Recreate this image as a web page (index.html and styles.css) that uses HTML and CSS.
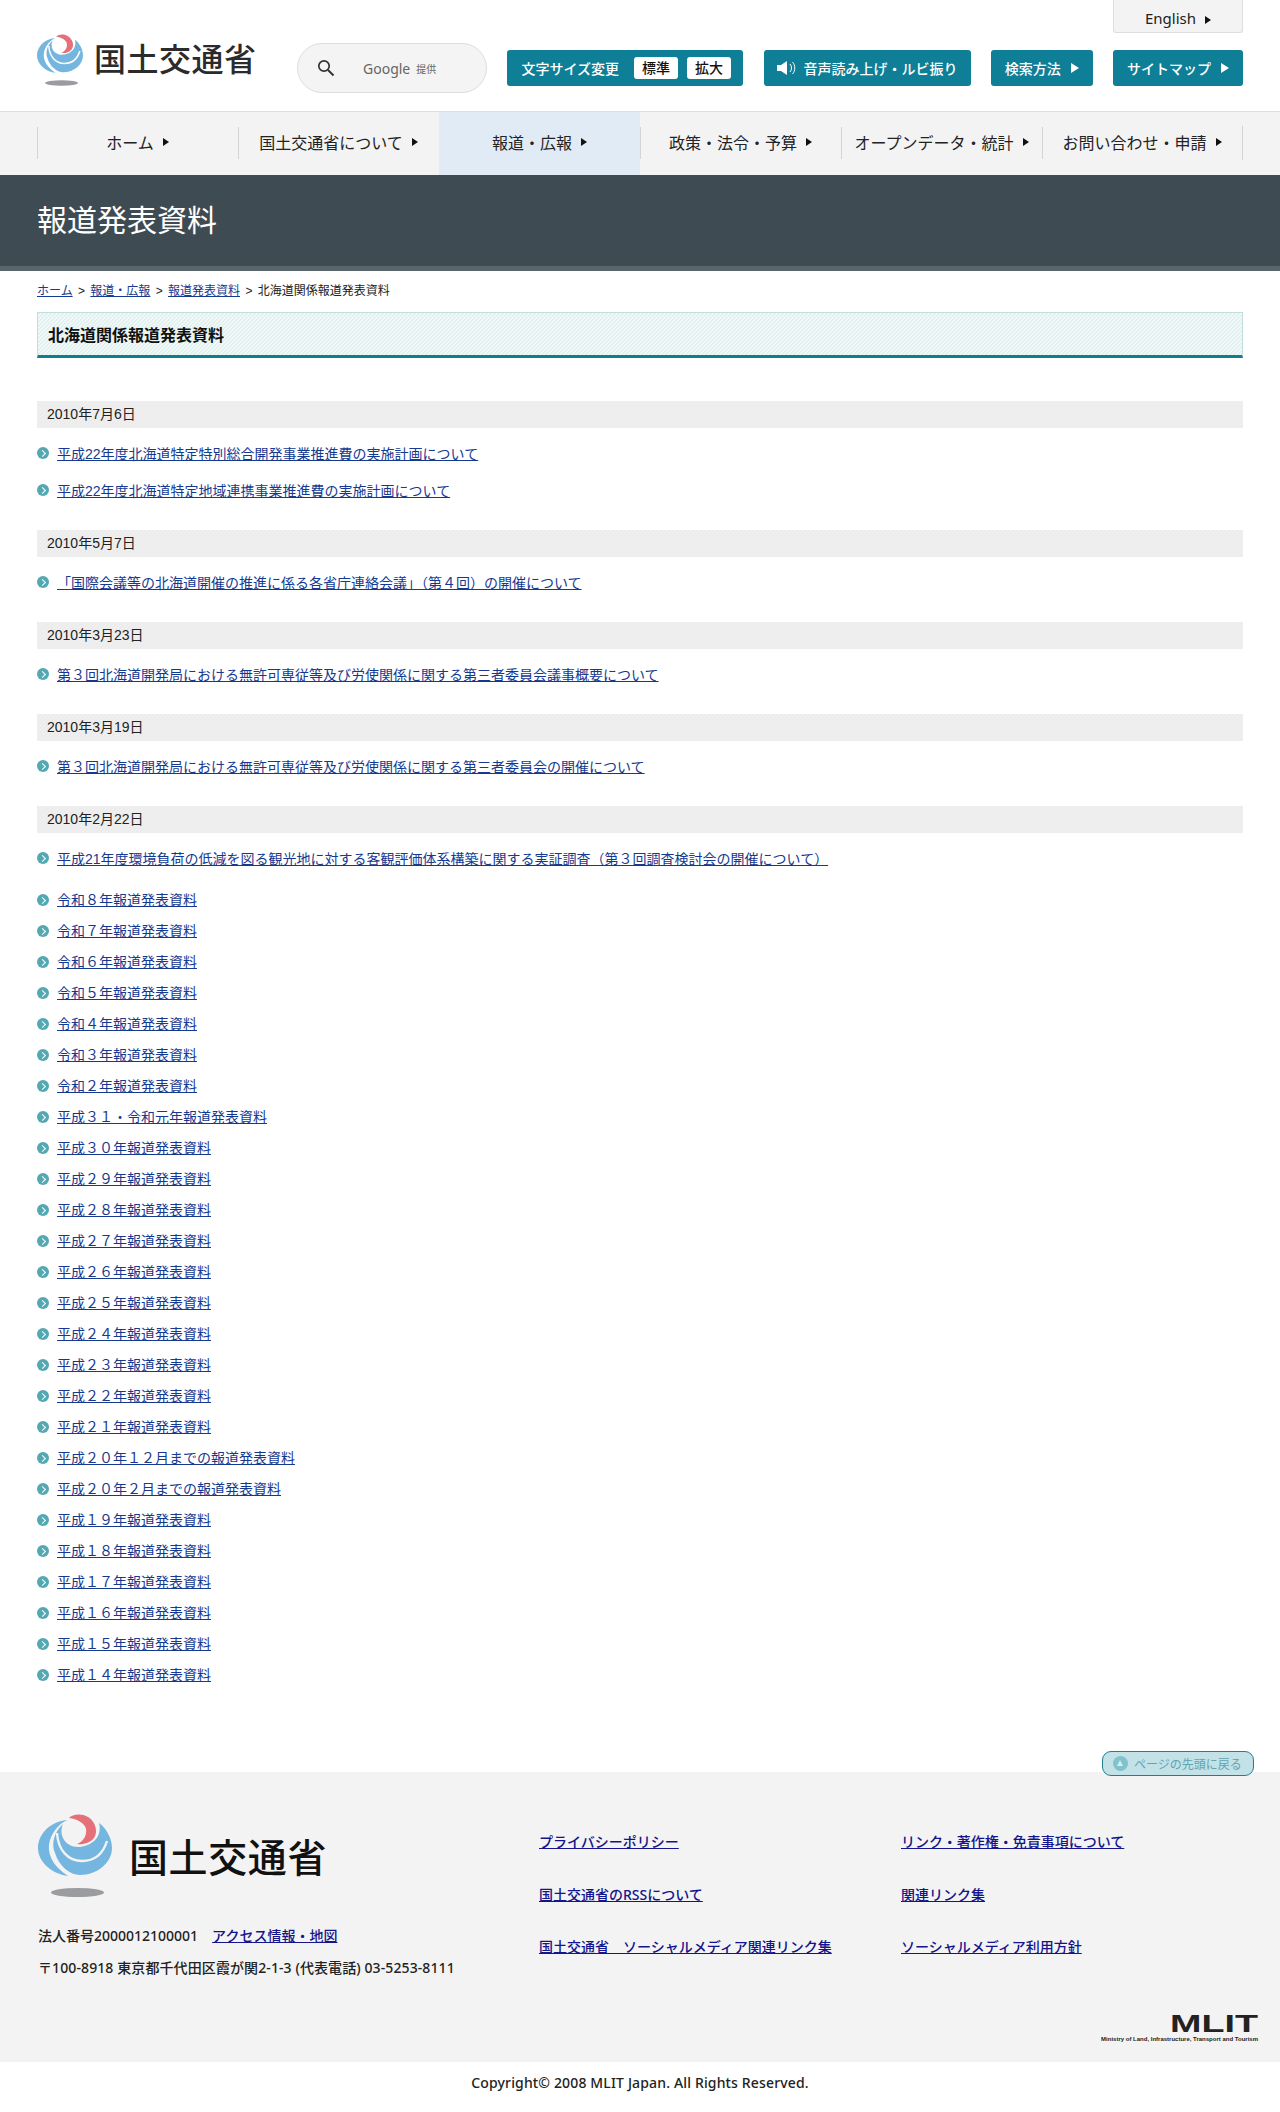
FILE: index.html
```html
<!DOCTYPE html>
<html lang="ja">
  <head>
    <meta charset="UTF-8" />
    <meta name="viewport" content="width=device-width, initial-scale=1.0" />
    <title>北海道関係報道発表資料 - 国土交通省</title>
    <link rel="stylesheet" href="styles.css">
  </head>
  <body>
    <svg class="defs" width="0" height="0">
      <symbol id="mlit-mark" viewBox="0 0 74 86">
        <path d="M29 6 C10 8 0 22 0 34 C0 48 14 60 30 62 C14 52 8 38 12 26 C15 17 21 10 29 6 Z" fill="#74b6df" />
        <path d="M25 10 C16 18 13 30 17 39 C21 52 32 61 42 61 C60 61 74 48 74 34 C74 24 68 14 61 9 C65 24 52 33 40 33 C28 33 20 22 25 10 Z" fill="#74b6df" />
        <path d="M19 19 C20 36 30 47 44 47 C56 47 65 40 69 27" fill="none" stroke="var(--logo-bg)" stroke-width="2.4" />
        <path d="M31 4 C34 0 44 -1 50 3 C58 8 60 18 56 24 C52 29 45 31 39 30 C46 27 49 21 48 15 C47 9 39 5 31 4 Z" fill="#e5707a" />
        <ellipse cx="39.5" cy="78.5" rx="26.5" ry="4.5" fill="#9b9ca0" />
      </symbol>
    </svg>

    <header class="site-header">
      <a class="logo" href="#">
        <svg class="logo-mark" width="46" height="54"><use href="#mlit-mark" /></svg>
        <span class="logo-name">国土交通省</span>
      </a>
      <div class="header-main">
        <div class="lang-row"><a class="lang-tab arrow" href="#">English</a></div>
        <div class="tools">
          <div class="search">
            <svg class="search-icon" width="18" height="18" viewBox="0 0 18 18">
              <circle cx="7" cy="7" r="5.2" fill="none" stroke="#333" stroke-width="1.7" />
              <path d="M11 11 L16.5 16.5" stroke="#333" stroke-width="2" />
            </svg>
            <span class="google">Google</span>
            <span class="google-by">提供</span>
          </div>
          <div class="tool tool-size">
            文字サイズ変更
            <span class="chip chip-first">標準</span>
            <span class="chip">拡大</span>
          </div>
          <a class="tool tool-voice" href="#">
            <svg width="20" height="16" viewBox="0 0 20 16">
              <path d="M0 5 H4 L10 1 V15 L4 11 H0 Z" fill="#fff" />
              <path d="M13 4 C15 6 15 10 13 12 M15.5 2 C18.5 5 18.5 11 15.5 14" fill="none" stroke="#fff" stroke-width="1" />
            </svg>
            音声読み上げ・ルビ振り
          </a>
          <a class="tool tool-method arrow arrow-white" href="#">検索方法</a>
          <a class="tool tool-map arrow arrow-white" href="#">サイトマップ</a>
        </div>
      </div>
    </header>

    <nav class="global-nav">
      <a class="arrow" href="#">ホーム</a>
      <a class="arrow" href="#">国土交通省について</a>
      <a class="arrow active" href="#">報道・広報</a>
      <a class="arrow" href="#">政策・法令・予算</a>
      <a class="arrow" href="#">オープンデータ・統計</a>
      <a class="arrow" href="#">お問い合わせ・申請</a>
    </nav>

    <div class="page-title"><h1>報道発表資料</h1></div>

    <main class="content">
      <p class="breadcrumb">
        <a href="#">ホーム</a> &gt; <a href="#">報道・広報</a> &gt; <a href="#">報道発表資料</a> &gt; 北海道関係報道発表資料
      </p>
      <h2 class="section-title">北海道関係報道発表資料</h2>

      <h3 class="date date-first">2010年7月6日</h3>
      <ul class="news">
        <li><a href="#">平成22年度北海道特定特別総合開発事業推進費の実施計画について</a></li>
        <li><a href="#">平成22年度北海道特定地域連携事業推進費の実施計画について</a></li>
      </ul>
      <h3 class="date">2010年5月7日</h3>
      <ul class="news">
        <li><a href="#">「国際会議等の北海道開催の推進に係る各省庁連絡会議」（第４回）の開催について</a></li>
      </ul>
      <h3 class="date">2010年3月23日</h3>
      <ul class="news">
        <li><a href="#">第３回北海道開発局における無許可専従等及び労使関係に関する第三者委員会議事概要について</a></li>
      </ul>
      <h3 class="date">2010年3月19日</h3>
      <ul class="news">
        <li><a href="#">第３回北海道開発局における無許可専従等及び労使関係に関する第三者委員会の開催について</a></li>
      </ul>
      <h3 class="date">2010年2月22日</h3>
      <ul class="news">
        <li><a href="#">平成21年度環境負荷の低減を図る観光地に対する客観評価体系構築に関する実証調査（第３回調査検討会の開催について）</a></li>
      </ul>

      <ul class="archive">
        <li><a href="#">令和８年報道発表資料</a></li>
        <li><a href="#">令和７年報道発表資料</a></li>
        <li><a href="#">令和６年報道発表資料</a></li>
        <li><a href="#">令和５年報道発表資料</a></li>
        <li><a href="#">令和４年報道発表資料</a></li>
        <li><a href="#">令和３年報道発表資料</a></li>
        <li><a href="#">令和２年報道発表資料</a></li>
        <li><a href="#">平成３１・令和元年報道発表資料</a></li>
        <li><a href="#">平成３０年報道発表資料</a></li>
        <li><a href="#">平成２９年報道発表資料</a></li>
        <li><a href="#">平成２８年報道発表資料</a></li>
        <li><a href="#">平成２７年報道発表資料</a></li>
        <li><a href="#">平成２６年報道発表資料</a></li>
        <li><a href="#">平成２５年報道発表資料</a></li>
        <li><a href="#">平成２４年報道発表資料</a></li>
        <li><a href="#">平成２３年報道発表資料</a></li>
        <li><a href="#">平成２２年報道発表資料</a></li>
        <li><a href="#">平成２１年報道発表資料</a></li>
        <li><a href="#">平成２０年１２月までの報道発表資料</a></li>
        <li><a href="#">平成２０年２月までの報道発表資料</a></li>
        <li><a href="#">平成１９年報道発表資料</a></li>
        <li><a href="#">平成１８年報道発表資料</a></li>
        <li><a href="#">平成１７年報道発表資料</a></li>
        <li><a href="#">平成１６年報道発表資料</a></li>
        <li><a href="#">平成１５年報道発表資料</a></li>
        <li><a href="#">平成１４年報道発表資料</a></li>
      </ul>
    </main>

    <footer class="site-footer">
      <a class="page-top" href="#"><span class="page-top-icon"></span>ページの先頭に戻る</a>
      <div class="footer-main">
        <div class="footer-info">
          <a class="footer-logo" href="#">
            <svg width="74" height="86"><use href="#mlit-mark" /></svg>
            <span class="footer-name">国土交通省</span>
          </a>
          <p class="corp-no">法人番号2000012100001<a href="#">アクセス情報・地図</a></p>
          <p class="address">〒100-8918 東京都千代田区霞が関2-1-3 (代表電話) 03-5253-8111</p>
        </div>
        <div class="footer-links">
          <a href="#">プライバシーポリシー</a>
          <a href="#">リンク・著作権・免責事項について</a>
          <a href="#">国土交通省のRSSについて</a>
          <a href="#">関連リンク集</a>
          <a href="#">国土交通省　ソーシャルメディア関連リンク集</a>
          <a href="#">ソーシャルメディア利用方針</a>
        </div>
      </div>
      <div class="footer-mlit">
        <span class="mlit-word">MLIT</span>
        <span class="mlit-full">Ministry of Land, Infrastructure, Transport and Tourism</span>
      </div>
    </footer>
    <p class="copyright">Copyright© 2008 MLIT Japan. All Rights Reserved.</p>
  </body>
</html>
```

FILE: styles.css
```css
* {
  box-sizing: border-box;
}
body {
  margin: 0;
  background-color: #fff;
  color: #222;
  font-family: "Noto Sans", "Noto Sans CJK JP", sans-serif;
  font-size: 14px;
  --logo-bg: #fff;
}
a {
  color: inherit;
  text-decoration: none;
}
p,
h1,
h2,
h3,
ul {
  margin: 0;
  padding: 0;
}
.defs {
  position: absolute;
}

/* arrows */
.arrow::after {
  content: "";
  display: inline-block;
  margin-left: 9px;
  border-left: 6px solid #111;
  border-top: 4px solid transparent;
  border-bottom: 4px solid transparent;
}
.arrow-white::after {
  margin-left: 10px;
  border-left: 8px solid #fff;
  border-top: 5px solid transparent;
  border-bottom: 5px solid transparent;
}

/* header */
.site-header {
  display: flex;
  height: 112px;
  padding: 0 37px;
  border-bottom: 1px solid #ddd;
}
.logo {
  display: flex;
  width: 260px;
  padding-top: 34px;
}
.logo-mark {
  flex: none;
}
.logo-name {
  margin: 3px 0 0 11px;
  color: #2b2b2b;
  font-family: "Noto Sans CJK JP", sans-serif;
  font-size: 32px;
  font-weight: 500;
  letter-spacing: 0.5px;
  line-height: 40px;
  white-space: nowrap;
}
.header-main {
  flex: 1;
}
.lang-row {
  display: flex;
  justify-content: flex-end;
  height: 43px;
}
.lang-tab {
  width: 130px;
  height: 33px;
  padding-top: 7px;
  background-color: #f3f3f3;
  border: 1px solid #ddd;
  border-top: none;
  border-radius: 0 0 3px 3px;
  font-size: 15px;
  line-height: 22px;
  text-align: center;
}
.tools {
  display: flex;
  align-items: center;
  justify-content: space-between;
}
.search {
  display: flex;
  align-items: center;
  width: 190px;
  height: 50px;
  padding-left: 19px;
  background-color: #f4f4f4;
  border: 1px solid #ddd;
  border-radius: 25px;
}
.search-icon {
  flex: none;
}
.google {
  margin-left: 28px;
  color: #666;
  font-size: 14px;
}
.google-by {
  margin: 1px 0 0 6px;
  color: #666;
  font-size: 10px;
}
.tool {
  display: flex;
  align-items: center;
  justify-content: center;
  height: 36px;
  background-color: #0e7f96;
  border-radius: 3px;
  color: #fff;
  font-size: 14px;
  font-weight: 500;
  white-space: nowrap;
}
.tool-size {
  width: 236px;
  padding-left: 2px;
}
.tool-voice {
  gap: 7px;
  width: 207px;
}
.tool-method {
  width: 102px;
}
.tool-map {
  width: 130px;
}
.chip {
  width: 44px;
  height: 22px;
  margin-left: 9px;
  background-color: #fff;
  border-radius: 3px;
  color: #111;
  font-size: 14px;
  line-height: 22px;
  text-align: center;
}
.chip-first {
  margin-left: 15px;
}

/* global nav */
.global-nav {
  display: grid;
  grid-template-columns: repeat(6, 1fr);
  height: 63px;
  padding: 0 37px;
  background-color: #f3f3f3;
}
.global-nav a {
  display: flex;
  align-items: center;
  justify-content: center;
  position: relative;
  padding-bottom: 3px;
  font-size: 16px;
  white-space: nowrap;
}
.global-nav a::before {
  content: "";
  position: absolute;
  left: 0;
  top: 15px;
  bottom: 16px;
  border-left: 1px solid #d4d4d4;
}
.global-nav a:last-child {
  border-right: 1px solid #d4d4d4;
  border-image: linear-gradient(transparent 15px, #d4d4d4 15px, #d4d4d4 47px, transparent 47px) 1;
}
.global-nav .active {
  background-color: #e0ebf5;
}
.global-nav .active::before {
  display: none;
}

/* title */
.page-title {
  height: 96px;
  padding-left: 37px;
  background-color: #3f4b52;
  border-bottom: 5px solid #59666c;
}
.page-title h1 {
  color: #fff;
  font-size: 30px;
  font-weight: 400;
  line-height: 89px;
}

/* content */
.content {
  padding: 10px 37px 0;
  font-family: "Liberation Sans", "Noto Sans CJK JP", sans-serif;
}
.content a {
  color: #15398f;
  text-decoration: underline;
}
.breadcrumb {
  font-size: 12px;
  line-height: 20px;
  word-spacing: 2px;
}
.section-title {
  height: 46px;
  margin-top: 11px;
  padding-left: 10px;
  background-color: #f1f8f8;
  background-image: linear-gradient(135deg, #e2f0f0 25%, transparent 25%, transparent 50%, #e2f0f0 50%, #e2f0f0 75%, transparent 75%);
  background-size: 4px 4px;
  border: 1px solid #c5dcdc;
  border-bottom: 3px solid #0e7f8c;
  color: #111;
  font-size: 16px;
  font-weight: 700;
  line-height: 46px;
}
.date {
  height: 27px;
  margin-top: 28px;
  padding-left: 10px;
  background-color: #f0f0f0;
  background-image: linear-gradient(135deg, #ebebeb 25%, transparent 25%, transparent 50%, #ebebeb 50%, #ebebeb 75%, transparent 75%);
  background-size: 4px 4px;
  font-size: 14px;
  font-weight: 400;
  line-height: 27px;
}
.date-first {
  margin-top: 43px;
}
.news,
.archive {
  list-style: none;
}
.news li,
.archive li {
  position: relative;
  padding-left: 20px;
  font-size: 14px;
  line-height: 22px;
}
.news li {
  margin-top: 15px;
}
.news li::before,
.archive li::before {
  content: "";
  position: absolute;
  left: 0;
  top: 4px;
  width: 12px;
  height: 12px;
  background-color: #54a8b2;
  border-radius: 50%;
}
.news li::after,
.archive li::after {
  content: "";
  position: absolute;
  left: 3px;
  top: 8px;
  width: 4px;
  height: 4px;
  border-top: 1px solid #fff;
  border-right: 1px solid #fff;
  transform: rotate(45deg);
}
.archive {
  margin-top: 15px;
}
.archive li {
  height: 31px;
  line-height: 31px;
}
.archive li::before {
  top: 9px;
}
.archive li::after {
  top: 13px;
}

/* footer */
.site-footer {
  position: relative;
  height: 290px;
  margin-top: 81px;
  background-color: #f3f3f3;
  --logo-bg: #f3f3f3;
}
.page-top {
  position: absolute;
  top: -21px;
  right: 26px;
  display: flex;
  align-items: center;
  width: 152px;
  height: 25px;
  padding-left: 10px;
  background-color: #c3e2e8;
  border: 1px solid #1f7f90;
  border-radius: 9px;
  color: #5fa4b0;
  font-size: 12px;
}
.page-top-icon {
  position: relative;
  width: 15px;
  height: 15px;
  margin-right: 6px;
  background-color: #7fc3cc;
  border-radius: 50%;
}
.page-top-icon::after {
  content: "";
  position: absolute;
  left: 4px;
  top: 4px;
  border-bottom: 6px solid #d5edf0;
  border-left: 3.5px solid transparent;
  border-right: 3.5px solid transparent;
}
.footer-main {
  display: flex;
  height: 208px;
  padding: 42px 0 0 38px;
}
.footer-info {
  width: 501px;
  font-weight: 500;
}
.footer-info a,
.footer-links a {
  color: #14148c;
  text-decoration: underline;
}
.footer-logo {
  display: flex;
  height: 86px;
}
.footer-info .footer-logo {
  text-decoration: none;
}
.footer-name {
  margin: 13px 0 0 17px;
  color: #111;
  font-family: "Noto Sans CJK JP", sans-serif;
  font-size: 39px;
  font-weight: 500;
  letter-spacing: 0.6px;
  line-height: 56px;
  white-space: nowrap;
}
.corp-no {
  margin-top: 24px;
  line-height: 24px;
}
.corp-no a {
  margin-left: 14px;
}
.address {
  margin-top: 8px;
  letter-spacing: 0.1px;
  line-height: 24px;
}
.footer-links {
  display: grid;
  grid-template-columns: 362px auto;
  grid-auto-rows: 26px;
  row-gap: 26.5px;
  margin-top: 15px;
  font-weight: 500;
  line-height: 26px;
}
.footer-links a {
  justify-self: start;
}
.footer-mlit {
  display: flex;
  flex-direction: column;
  align-items: flex-end;
  margin-top: 34px;
  padding-right: 22px;
}
.mlit-word {
  color: #222;
  font-family: "Liberation Sans", sans-serif;
  font-size: 24px;
  font-weight: 700;
  line-height: 19px;
  transform: scaleX(1.57);
  transform-origin: right;
}
.mlit-full {
  margin-top: 2px;
  font-family: "Liberation Sans", sans-serif;
  font-size: 6px;
  font-weight: 700;
  line-height: 9px;
  white-space: nowrap;
}
.copyright {
  padding-top: 10px;
  font-size: 14px;
  font-weight: 500;
  letter-spacing: 0.15px;
  line-height: 22px;
  text-align: center;
}
```
